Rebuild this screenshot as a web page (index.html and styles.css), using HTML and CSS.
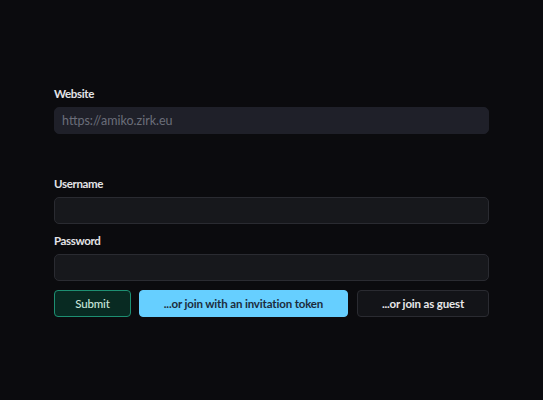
FILE: index.html
```html
<!DOCTYPE html>
<html lang="en">
<head>
<meta charset="utf-8">
<title>Login</title>
<link rel="stylesheet" href="styles.css">
</head>
<body>
<main class="page">
  <form class="form">
    <div class="field">
      <label class="label" for="website">Website</label>
      <input class="input input-disabled" id="website" type="text" placeholder="https://amiko.zirk.eu" disabled>
    </div>
    <div class="spacer"></div>
    <div class="field">
      <label class="label" for="username">Username</label>
      <input class="input" id="username" type="text">
    </div>
    <div class="field">
      <label class="label" for="password">Password</label>
      <input class="input" id="password" type="password">
    </div>
    <div class="actions">
      <button class="btn btn-submit" type="button">Submit</button>
      <button class="btn btn-invite" type="button">...or join with an invitation token</button>
      <button class="btn btn-guest" type="button">...or join as guest</button>
    </div>
  </form>
</main>
</body>
</html>
```
FILE: styles.css
```css
html, body {
  margin: 0;
  padding: 0;
  background: #0b0b0e;
  height: 100%;
}
body {
  font-family: Lato, "Open Sans", sans-serif;
  color: #e6e6e8;
}
.page {
  padding: 86px 54px 0 54px;
}
.form {
  width: 435px;
  display: flex;
  flex-direction: column;
  gap: 9px;
}
.field {
  display: flex;
  flex-direction: column;
}
.label {
  font-size: 11.5px;
  font-weight: 700;
  letter-spacing: -0.35px;
  line-height: 16px;
  color: #e4e4e7;
  margin-bottom: 5px;
}
.input {
  box-sizing: border-box;
  height: 27px;
  width: 100%;
  border: 1px solid #2a2b31;
  border-radius: 5px;
  background: #17181c;
  padding: 0 7px;
  font-family: Lato, "Open Sans", sans-serif;
  font-size: 12.5px;
  color: #e4e4e7;
  outline: none;
}
.input-disabled {
  background: #1f2029;
  border-color: #1f2029;
}
.input::placeholder {
  color: #6b6e7a;
}
.spacer {
  height: 24px;
}
.actions {
  display: flex;
  gap: 8px;
}
.btn {
  box-sizing: border-box;
  height: 27px;
  border-radius: 4px;
  font-family: Lato, "Open Sans", sans-serif;
  font-size: 11.5px;
  letter-spacing: -0.15px;
  padding: 0;
  cursor: pointer;
}
.btn-submit {
  width: 77px;
  background: #082a22;
  border: 1px solid #1d8f72;
  color: #c9e6dc;
  font-weight: 500;
}
.btn-invite {
  flex: 1;
  margin-right: 1px;
  background: #66cfff;
  border: 1px solid #66cfff;
  color: #1c2c3c;
  font-weight: 700;
}
.btn-guest {
  width: 132px;
  background: #131418;
  border: 1px solid #2a2b31;
  color: #e8e8ea;
  font-weight: 700;
}
```
